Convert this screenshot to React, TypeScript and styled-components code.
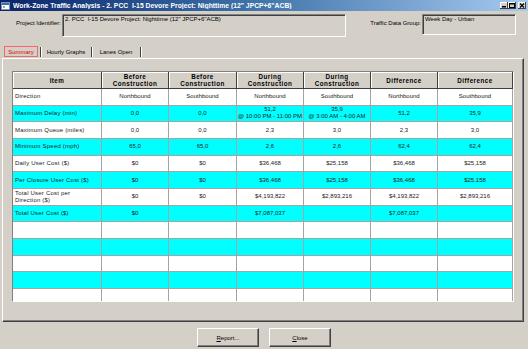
import React from 'react'
import styled, { createGlobalStyle } from 'styled-components'

const GlobalStyle = createGlobalStyle`
  html, body {
    margin: 0;
    padding: 0;
    background: #d4d0c8;
  }
  body {
    font-family: "Liberation Sans", Arial, sans-serif;
  }
`

type RowData = { item: React.ReactNode; cells: React.ReactNode[] }

const headers = [
    'Item',
    <>Before<br />Construction</>,
    <>Before<br />Construction</>,
    <>During<br />Construction</>,
    <>During<br />Construction</>,
    'Difference',
    'Difference',
]

const rows: RowData[] = [
    { item: 'Direction', cells: ['Northbound', 'Southbound', 'Northbound', 'Southbound', 'Northbound', 'Southbound'] },
    {
        item: 'Maximum Delay (min)',
        cells: [
            '0,0',
            '0,0',
            <>51,2<br />@ 10:00 PM - 11:00 PM</>,
            <>35,9<br />@ 3:00 AM - 4:00 AM</>,
            '51,2',
            '35,9',
        ],
    },
    { item: 'Maximum Queue (miles)', cells: ['0,0', '0,0', '2,3', '3,0', '2,3', '3,0'] },
    { item: 'Minimum Speed (mph)', cells: ['65,0', '65,0', '2,6', '2,6', '62,4', '62,4'] },
    { item: 'Daily User Cost ($)', cells: ['$0', '$0', '$36,468', '$25,158', '$36,468', '$25,158'] },
    { item: 'Per Closure User Cost ($)', cells: ['$0', '$0', '$36,468', '$25,158', '$36,468', '$25,158'] },
    {
        item: <>Total User Cost per<br />Direction ($)</>,
        cells: ['$0', '$0', '$4,193,822', '$2,893,216', '$4,193,822', '$2,893,216'],
    },
    { item: 'Total User Cost ($)', cells: ['$0', '', '$7,087,037', '', '$7,087,037', ''] },
]

// blank rows that fill the rest of the grid
const emptyRows = 5

export default function App() {
    const allRows: RowData[] = [
        ...rows,
        ...Array.from({ length: emptyRows }, () => ({ item: '', cells: ['', '', '', '', '', ''] })),
    ]

    return (
        <>
            <GlobalStyle />
            <Window>
                <TitleBar>
                    <svg width="9" height="8" viewBox="0 0 9 8">
                        <rect x="0.5" y="0.5" width="8" height="7" fill="#fff" stroke="#8090b0" />
                        <rect x="1" y="1" width="7" height="2" fill="#3a6ea5" />
                        <rect x="2" y="4" width="2" height="2" fill="#9aa8c0" />
                    </svg>
                    <TitleText>
                        Work-Zone Traffic Analysis - 2. PCC&nbsp; I-15 Devore Project: Nighttime (12" JPCP+6"ACB)
                    </TitleText>
                    <CapButton>
                        <svg width="6" height="5" viewBox="0 0 6 5">
                            <rect x="1" y="3" width="4" height="1.5" fill="#000" />
                        </svg>
                    </CapButton>
                    <CapButton>
                        <svg width="6" height="5" viewBox="0 0 6 5">
                            <rect x="0.5" y="0.5" width="5" height="4" fill="none" stroke="#000" />
                            <rect x="0.5" y="0.5" width="5" height="1" fill="#000" />
                        </svg>
                    </CapButton>
                    <CapButton $gap>
                        <svg width="6" height="5" viewBox="0 0 6 5">
                            <path d="M1 0.5 L5 4.5 M5 0.5 L1 4.5" stroke="#000" strokeWidth="1.1" />
                        </svg>
                    </CapButton>
                </TitleBar>

                <FieldsRow>
                    <FieldLabel $w={62} $top={6}>Project Identifier:</FieldLabel>
                    <FieldBox $w={284} $h={23}>2. PCC&nbsp; I-15 Devore Project: Nighttime (12" JPCP+6"ACB)</FieldBox>
                    <FieldLabel $w={76} $top={6}>Traffic Data Group:</FieldLabel>
                    <FieldBox $w={94} $h={21}>Week Day - Urban</FieldBox>
                </FieldsRow>

                <TabStrip>
                    <Tab $active $w={34}>Summary</Tab>
                    <TabSeparator />
                    <Tab $w={46}>Hourly Graphs</Tab>
                    <TabSeparator />
                    <Tab $w={44}>Lanes Open</Tab>
                    <TabSeparator />
                </TabStrip>

                <TabPanel>
                    <Table>
                        {headers.map((h, i) => (
                            <HeaderCell key={'h' + i}>{h}</HeaderCell>
                        ))}
                        {allRows.map((row, r) => (
                            <React.Fragment key={r}>
                                <ItemCell $cyan={r % 2 === 1}>{row.item}</ItemCell>
                                {row.cells.map((c, i) => (
                                    <Cell key={i} $cyan={r % 2 === 1}>
                                        <span>{c}</span>
                                    </Cell>
                                ))}
                            </React.Fragment>
                        ))}
                    </Table>
                </TabPanel>

                <Footer>
                    <Button>
                        <u>R</u>eport...
                    </Button>
                    <Button>
                        <u>C</u>lose
                    </Button>
                </Footer>
            </Window>
        </>
    )
}

const Window = styled.div`
    width: 528px;
    height: 349px;
    display: flex;
    flex-direction: column;
    background: #d4d0c8;
    overflow: hidden;
`

const TitleBar = styled.div`
    height: 11px;
    flex: none;
    display: flex;
    align-items: center;
    padding: 0 2px 0 1px;
    background: linear-gradient(to right, #0a246a 0%, #3a6ea5 45%, #a6caf0 100%);
`

const TitleText = styled.div`
    flex: 1;
    margin-left: 3px;
    color: #fff;
    font-weight: bold;
    font-size: 6.8px;
    white-space: nowrap;
    overflow: hidden;
`

const CapButton = styled.div<{ $gap?: boolean }>`
    width: 8px;
    height: 7px;
    margin-left: ${p => (p.$gap ? 2 : 0)}px;
    background: #d4d0c8;
    box-shadow: inset -1px -1px #404040, inset 1px 1px #fff;
    display: flex;
    align-items: center;
    justify-content: center;
`

const FieldsRow = styled.div`
    flex: none;
    height: 35px;
    box-sizing: border-box;
    padding-top: 3px;
    display: flex;
    align-items: flex-start;
`

const FieldLabel = styled.div<{ $w: number; $top: number }>`
    width: ${p => p.$w}px;
    padding: ${p => p.$top}px 1px 0 0;
    box-sizing: border-box;
    text-align: right;
    font-size: 6px;
    color: #000;
    white-space: nowrap;
`

const FieldBox = styled.div<{ $w: number; $h: number }>`
    width: ${p => p.$w}px;
    height: ${p => p.$h}px;
    box-sizing: border-box;
    padding: 1px 2px;
    border: 1px solid;
    border-color: #808080 #fff #fff #808080;
    box-shadow: inset 1px 1px #404040, inset -1px -1px #d4d0c8;
    font-size: 6px;
    color: #000;
    white-space: nowrap;
    overflow: hidden;
`

const TabStrip = styled.div`
    flex: none;
    height: 12px;
    padding: 0 0 0 4px;
    box-sizing: border-box;
    display: flex;
    align-items: stretch;
    gap: 2px;
`

const Tab = styled.div<{ $active?: boolean; $w: number }>`
    width: ${p => p.$w}px;
    height: 11px;
    box-sizing: border-box;
    display: flex;
    align-items: center;
    justify-content: center;
    font-size: 6px;
    color: ${p => (p.$active ? '#e00000' : '#000')};
    border: 1px solid ${p => (p.$active ? '#e07070' : 'transparent')};
    box-shadow: ${p => (p.$active ? 'inset 1px 1px #f4c0c0' : 'none')};
    white-space: nowrap;
`

const TabSeparator = styled.div`
    width: 1px;
    height: 10px;
    margin-top: 1px;
    background: #404040;
    box-shadow: 1px 0 #fff;
`

const TabPanel = styled.div`
    flex: none;
    height: 264px;
    margin: 0 4px 0 2px;
    box-sizing: border-box;
    border: 1px solid;
    border-color: #fff #404040 #404040 #fff;
    box-shadow: inset -1px -1px #808080;
    padding: 12px 0 0 9px;
`

const Table = styled.div`
    width: 502px;
    height: 231px;
    box-sizing: border-box;
    overflow: hidden;
    border: 1px solid;
    border-color: #808080 #fff #fff #808080;
    background: #fff;
    display: grid;
    grid-template-columns: 89px 67px 68px 67px 67px 67px 1fr;
    grid-template-rows: 17px;
    grid-auto-rows: 16.67px;
`

const HeaderCell = styled.div`
    background: #d4d0c8;
    border-right: 1px solid #404040;
    border-bottom: 1px solid #404040;
    box-shadow: inset 1px 1px #fff;
    display: flex;
    align-items: center;
    justify-content: center;
    text-align: center;
    font-weight: bold;
    font-size: 6.3px;
    letter-spacing: 0.45px;
    line-height: 7px;
    color: #000;
`

const Cell = styled.div<{ $cyan?: boolean }>`
    background: ${p => (p.$cyan ? '#00ffff' : '#fff')};
    border-right: 1px solid #a4a4a4;
    border-bottom: 1px solid #a4a4a4;
    display: flex;
    align-items: center;
    justify-content: center;
    overflow: hidden;
    font-size: 6px;
    line-height: 7px;
    color: #202020;
    text-align: center;
    white-space: nowrap;

    span {
        flex: none;
    }
`

const ItemCell = styled(Cell)`
    justify-content: flex-start;
    text-align: left;
    padding-left: 2px;
    letter-spacing: 0.2px;
`

const Footer = styled.div`
    flex: 1;
    display: flex;
    justify-content: center;
    align-items: flex-start;
    padding-top: 6px;
    gap: 10px;
`

const Button = styled.div`
    width: 62px;
    height: 19px;
    box-sizing: border-box;
    display: flex;
    align-items: center;
    justify-content: center;
    background: #d4d0c8;
    border: 1px solid;
    border-color: #fff #404040 #404040 #fff;
    box-shadow: inset -1px -1px #808080;
    font-size: 6px;
    color: #000;
`
